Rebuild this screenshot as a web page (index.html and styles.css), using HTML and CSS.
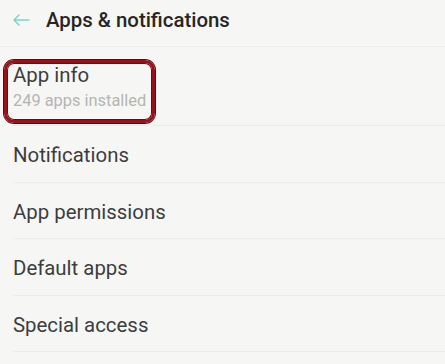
FILE: index.html
```html
<!DOCTYPE html>
<html lang="en">
<head>
  <meta charset="UTF-8">
  <title>Apps &amp; notifications</title>
  <link rel="stylesheet" href="styles.css">
</head>
<body>

  <div class="screen">
    <div class="toolbar">
      <svg class="back" width="18" height="12" viewBox="0 0 18 12">
        <path d="M17 6H2M7 1L2 6l5 5" fill="none" stroke="#7fd3cc" stroke-width="1.5" stroke-linecap="round" stroke-linejoin="round"/>
      </svg>
      <h1>Apps &amp; notifications</h1>
    </div>

    <div class="item item-info">
      <div class="item-title">App info</div>
      <div class="item-sub">249 apps installed</div>
      <div class="mark"></div>
    </div>
    <div class="item">
      <div class="item-title">Notifications</div>
    </div>
    <div class="item">
      <div class="item-title">App permissions</div>
    </div>
    <div class="item">
      <div class="item-title">Default apps</div>
    </div>
    <div class="item">
      <div class="item-title">Special access</div>
    </div>
  </div>

</body>
</html>
```

FILE: styles.css
```css
body {
  margin: 0;
  background-color: #f6f7f4;
  font-family: 'Roboto', 'Liberation Sans', sans-serif;
  color: #3d3d3d;
}
.screen {
  height: 364px;
  overflow: hidden;
}
.toolbar {
  display: flex;
  align-items: center;
  height: 47px;
  box-sizing: border-box;
  padding: 0 0 6px 12px;
  border-bottom: 1px solid #edeeeb;
}
.back {
  flex: none;
}
.toolbar h1 {
  margin: 0 0 0 16px;
  font-size: 20.4px;
  font-weight: 500;
  color: #262626;
  line-height: 24px;
}
.item {
  position: relative;
  margin-left: 13px;
  height: 56.5px;
  box-sizing: border-box;
  padding-top: 3px;
  display: flex;
  flex-direction: column;
  justify-content: center;
  border-bottom: 1px solid #ecedea;
}
.item-info {
  height: 79px;
  justify-content: flex-start;
  padding-top: 16px;
}
.item-title {
  font-size: 20.4px;
  line-height: 24px;
}
.item-sub {
  margin-top: 4px;
  font-size: 16.4px;
  line-height: 20px;
  color: #b4b5b2;
}
.mark {
  position: absolute;
  left: -9px;
  top: 13px;
  width: 151px;
  height: 63px;
  box-sizing: border-box;
  border: 3px solid #9a1119;
  border-radius: 10px;
  box-shadow: 0 0 0 1px #5e0b10, inset 0 0 0 1px #6a0c12;
}
```
